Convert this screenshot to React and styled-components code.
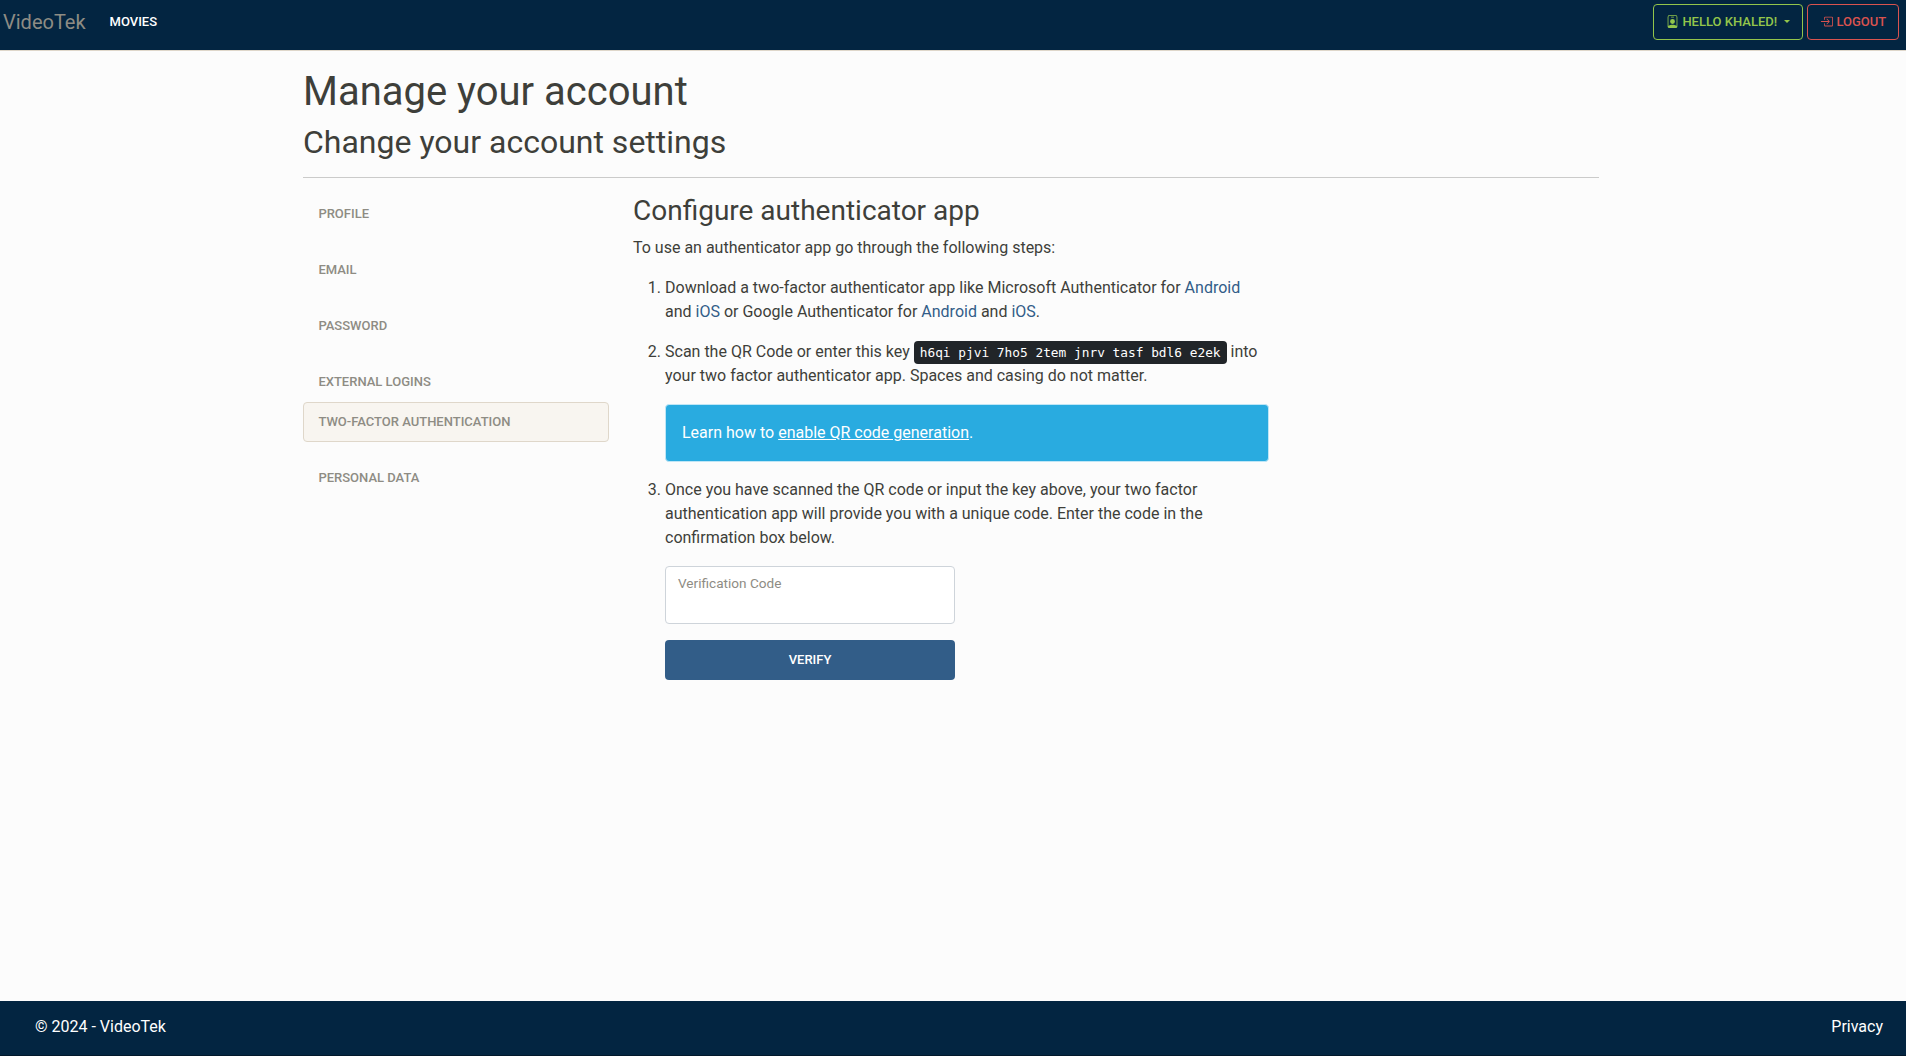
import React from "react";
import styled, { createGlobalStyle } from "styled-components";
import { BsPersonBadge, BsBoxArrowInRight } from "react-icons/bs";

const GlobalStyle = createGlobalStyle`
  *, *::before, *::after { box-sizing: border-box; }
  body {
    margin: 0;
    font: 400 16px/1.5 Roboto, "Liberation Sans", sans-serif;
    color: #3e3f3a;
    background: #fcfcfc;
  }
`;

const Page = styled.div`
  min-height: 1056px;
  display: flex;
  flex-direction: column;
`;

const Navbar = styled.header`
  display: flex;
  height: 51px;
  padding: 4px 7px 0 3px;
  background: #032541;
  border-bottom: 1px solid #dfd7ca;
`;

const Brand = styled.a`
  height: 36px;
  line-height: 36px;
  font-size: 20px;
  color: #8e8c84;
  margin-right: 24px;
`;

const MenuLink = styled.a`
  line-height: 22px;
  padding-top: 7px;
  font-size: 13px;
  font-weight: 500;
  text-transform: uppercase;
  color: #fff;
`;

const Actions = styled.div`
  display: flex;
  gap: 4px;
  margin-left: auto;
`;

const OutlineButton = styled.button`
  display: flex;
  align-items: center;
  width: ${(p) => p.$width}px;
  height: 36px;
  padding: 0 0 0 12.4px;
  background: transparent;
  border: 1px solid ${(p) => p.$color};
  border-radius: 4px;
  color: ${(p) => p.$color};
  font: 500 13px/22px Roboto, "Liberation Sans", sans-serif;
  text-transform: uppercase;
  white-space: nowrap;
  svg { width: 13px; height: 13px; margin-right: 3px; margin-top: -1px; flex: none; }
`;

const Caret = styled.span`
  margin-left: 7px;
  margin-top: -1px;
  border-top: 3px solid currentColor;
  border-left: 3px solid transparent;
  border-right: 3px solid transparent;
`;

const Container = styled.main`
  width: 1320px;
  margin-left: 291px;
  padding: 17px 12px 0;
  flex: 1;
`;

const Title = styled.h1`
  margin: 0 0 7px;
  font-size: 40px;
  line-height: 48px;
  font-weight: 400;
`;

const Subtitle = styled.h2`
  margin: 0;
  font-size: 32px;
  line-height: 38.4px;
  font-weight: 400;
`;

const Rule = styled.hr`
  margin: 16px 0;
  border: 0;
  border-top: 1px solid #cbcbca;
`;

const Columns = styled.div`
  display: grid;
  grid-template-columns: 306px 636px;
  gap: 24px;
`;

const SideNav = styled.nav`
  display: flex;
  flex-direction: column;
`;

const SideLink = styled.a`
  height: 40px;
  margin-bottom: ${(p) => (p.$tight ? 0 : 16)}px;
  padding: 8px 14.4px;
  border: 1px solid ${(p) => (p.$active ? "#dfd7ca" : "transparent")};
  border-radius: 4px;
  background: ${(p) => (p.$active ? "#f8f5f0" : "transparent")};
  color: #8e8c84;
  font-size: 13px;
  line-height: 22px;
  font-weight: 500;
  text-transform: uppercase;
`;

const SectionTitle = styled.h3`
  margin: 0 0 8px;
  font-size: 28px;
  line-height: 33.6px;
  font-weight: 400;
`;

const Paragraph = styled.p`
  margin: 0 0 16px;
`;

const Steps = styled.ol`
  margin: 0;
  padding-left: 32px;
`;

const Link = styled.a`
  color: #325d88;
`;

const Key = styled.kbd`
  padding: 4px 6px;
  border-radius: 4px;
  background: #212529;
  color: #fff;
  font: 12.82px "DejaVu Sans Mono", monospace;
  line-height: 1;
`;

const Alert = styled.div`
  margin-bottom: 16px;
  padding: 16px;
  border: 1px solid #bfe6f6;
  border-radius: 4px;
  background: #29abe0;
  color: #fff;
  a { text-decoration: underline; }
`;

const Form = styled.form`
  width: 290px;
  display: flex;
  flex-direction: column;
  gap: 16px;
`;

const Field = styled.label`
  height: 58px;
  padding: 6px 12px;
  border: 1px solid #ced4da;
  border-radius: 4px;
  background: #fff;
  color: #8e8c84;
  font-size: 13.6px;
  line-height: 20.4px;
`;

const Submit = styled.button`
  height: 40px;
  border: 0;
  border-radius: 4px;
  background: #325d88;
  color: #fff;
  font: 500 13px/22px Roboto, "Liberation Sans", sans-serif;
  text-transform: uppercase;
`;

const Footer = styled.footer`
  display: flex;
  justify-content: space-between;
  height: 55px;
  padding: 14px 23px 0 35px;
  background: #032541;
  border-bottom: 1px solid #02182b;
  color: #fff;
`;

const sections = [
  { label: "Profile" },
  { label: "Email" },
  { label: "Password" },
  { label: "External logins", tight: true },
  { label: "Two-factor authentication", active: true },
  { label: "Personal data" },
];

export default function App() {
  return (
    <Page>
      <GlobalStyle />
      <Navbar>
        <Brand>VideoTek</Brand>
        <MenuLink>Movies</MenuLink>
        <Actions>
          <OutlineButton $color="#93c54b" $width={150}>
            <BsPersonBadge />
            Hello Khaled!
            <Caret />
          </OutlineButton>
          <OutlineButton $color="#d9534f" $width={92}>
            <BsBoxArrowInRight />
            Logout
          </OutlineButton>
        </Actions>
      </Navbar>
      <Container>
        <Title>Manage your account</Title>
        <Subtitle>Change your account settings</Subtitle>
        <Rule />
        <Columns>
          <SideNav>
            {sections.map((s) => (
              <SideLink key={s.label} $active={s.active} $tight={s.tight}>
                {s.label}
              </SideLink>
            ))}
          </SideNav>
          <section>
            <SectionTitle>Configure authenticator app</SectionTitle>
            <Paragraph>To use an authenticator app go through the following steps:</Paragraph>
            <Steps>
              <li>
                <Paragraph>
                  Download a two-factor authenticator app like Microsoft Authenticator for{" "}
                  <Link>Android</Link> and <Link>iOS</Link> or Google Authenticator for{" "}
                  <Link>Android</Link> and <Link>iOS</Link>.
                </Paragraph>
              </li>
              <li>
                <Paragraph>
                  Scan the QR Code or enter this key{" "}
                  <Key>h6qi pjvi 7ho5 2tem jnrv tasf bdl6 e2ek</Key> into your two factor
                  authenticator app. Spaces and casing do not matter.
                </Paragraph>
                <Alert>
                  Learn how to <a>enable QR code generation</a>.
                </Alert>
              </li>
              <li>
                <Paragraph>
                  Once you have scanned the QR code or input the key above, your two factor
                  authentication app will provide you with a unique code. Enter the code in the
                  confirmation box below.
                </Paragraph>
                <Form>
                  <Field>Verification Code</Field>
                  <Submit type="button">Verify</Submit>
                </Form>
              </li>
            </Steps>
          </section>
        </Columns>
      </Container>
      <Footer>
        <span>© 2024 - VideoTek</span>
        <a>Privacy</a>
      </Footer>
    </Page>
  );
}
